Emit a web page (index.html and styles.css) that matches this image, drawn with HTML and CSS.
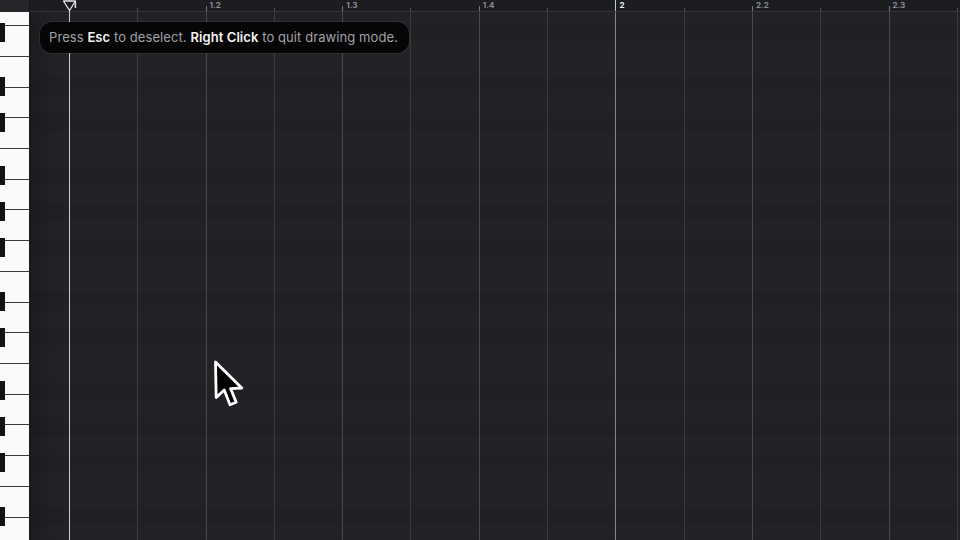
FILE: index.html
```html
<!DOCTYPE html>
<html lang="en">
<head>
    <meta charset="UTF-8">
    <title>Piano Roll</title>
    <link rel="stylesheet" href="styles.css">
</head>

<body>
    <div class="daw">
        <!--건반-->
        <aside class="keys">
            <div class="keys-corner"></div>
            <div class="keys-view">
                <div class="octave">
                    <div class="white"></div><div class="white"></div><div class="white"></div><div class="white"></div>
                    <div class="white"></div><div class="white"></div><div class="white"></div>
                    <span class="black k-as"></span><span class="black k-gs"></span><span class="black k-fs"></span>
                    <span class="black k-ds"></span><span class="black k-cs"></span>
                </div>
                <div class="octave">
                    <div class="white"></div><div class="white"></div><div class="white"></div><div class="white"></div>
                    <div class="white"></div><div class="white"></div><div class="white"></div>
                    <span class="black k-as"></span><span class="black k-gs"></span><span class="black k-fs"></span>
                    <span class="black k-ds"></span><span class="black k-cs"></span>
                </div>
                <div class="octave">
                    <div class="white"></div><div class="white"></div><div class="white"></div><div class="white"></div>
                    <div class="white"></div><div class="white"></div><div class="white"></div>
                    <span class="black k-as"></span><span class="black k-gs"></span><span class="black k-fs"></span>
                    <span class="black k-ds"></span><span class="black k-cs"></span>
                </div>
            </div>
        </aside>

        <!--롤 영역-->
        <main class="roll">
            <div class="ruler">
                <div class="lead"></div>
                <div class="cell bar"><b>1</b></div>
                <div class="cell sub"></div>
                <div class="cell beat"><b>1.2</b></div>
                <div class="cell sub"></div>
                <div class="cell beat"><b>1.3</b></div>
                <div class="cell sub"></div>
                <div class="cell beat"><b>1.4</b></div>
                <div class="cell sub"></div>
                <div class="cell bar"><b>2</b></div>
                <div class="cell sub"></div>
                <div class="cell beat"><b>2.2</b></div>
                <div class="cell sub"></div>
                <div class="cell beat"><b>2.3</b></div>
                <div class="cell sub"></div>
            </div>

            <div class="lanes">
                <div class="lead"></div>
                <div class="cell bar"></div>
                <div class="cell sub"></div>
                <div class="cell beat"></div>
                <div class="cell sub"></div>
                <div class="cell beat"></div>
                <div class="cell sub"></div>
                <div class="cell beat"></div>
                <div class="cell sub"></div>
                <div class="cell bar"></div>
                <div class="cell sub"></div>
                <div class="cell beat"></div>
                <div class="cell sub"></div>
                <div class="cell beat"></div>
                <div class="cell sub"></div>
            </div>

            <!--재생헤드-->
            <div class="playhead">
                <svg class="playhead-cap" width="15" height="12" viewBox="0 0 15 12">
                    <path d="M1.5 1 L13.5 1 L7.5 10.5 Z" fill="#1c1d21" stroke="#e4e4e6" stroke-width="1.3" stroke-linejoin="round"/>
                </svg>
            </div>

            <!--안내문구-->
            <div class="hint">
                Press <b>Esc</b> to deselect. <b>Right Click</b> to quit drawing mode.
            </div>

            <!--마우스커서-->
            <svg class="cursor" width="34" height="52" viewBox="0 0 34 52">
                <path d="M3.5 3 L4.2 38.5 L12.2 31 L18 45.8 L24.2 43.2 L18.6 29.6 L29.8 29 Z"
                      fill="#000" stroke="#fff" stroke-width="2.8" stroke-linejoin="round"/>
            </svg>
        </main>
    </div>
</body>
</html>
```

FILE: styles.css
```css
html,
body {
    margin: 0;
    padding: 0;
}

body {
    background-color: #212226;
    font-family: Inter, "Noto Sans", sans-serif;
    overflow: hidden;
}

.daw {
    display: flex;
    width: 960px;
    height: 540px;
}

/*건반*/
.keys {
    display: flex;
    flex-direction: column;
    flex: 0 0 29px;
    border-right: 1px solid #17181b;
}

.keys-corner {
    flex: 0 0 12px;
    background-color: #26272b;
}

.keys-view {
    flex: 1;
    overflow: hidden;
    background-color: #fafafa;
}

.octave {
    position: relative;
    display: flex;
    flex-direction: column;
    height: 215px;
}

/*첫 옥타브는 화면 위로 올려서 시작*/
.octave:first-child {
    margin-top: -78px;
}

.white {
    flex: 1;
    border-bottom: 1px solid #3a3a3c;
    background-color: #fafafa;
}

.black {
    position: absolute;
    left: 0;
    width: 5px;
    height: 19px;
    background-color: #131313;
}

.k-as { top: 17.4px; }
.k-gs { top: 53.3px; }
.k-fs { top: 89.1px; }
.k-ds { top: 142.8px; }
.k-cs { top: 178.7px; }

/*롤*/
.roll {
    position: relative;
    display: flex;
    flex-direction: column;
    flex: 1;
    overflow: hidden;
}

.ruler,
.lanes {
    display: flex;
}

.lead {
    flex: 0 0 39px;
}

.cell {
    flex: 0 0 68.3px;
    box-sizing: border-box;
}

/*눈금자*/
.ruler {
    flex: 0 0 11px;
    background-color: #1c1d21;
    border-bottom: 1px solid #36373c;
}

.ruler .cell {
    padding: 1px 0 0 4px;
    font-size: 8px;
    line-height: 8px;
    color: #8b8c91;
    background-repeat: no-repeat;
    background-position: left bottom;
}

.ruler b {
    font-weight: 700;
}

.ruler .sub {
    background-image: linear-gradient(#55565b, #55565b);
    background-size: 1px 3px;
}

.ruler .beat {
    background-image: linear-gradient(#75767b, #75767b);
    background-size: 1px 5px;
}

.ruler .bar {
    background-image: linear-gradient(#c9c9cc, #c9c9cc);
    background-size: 1px 11px;
    color: #f1f1f3;
}

/*그리드*/
.lanes {
    flex: 1;
    background-color: #222327;
    /*검은건반 줄은 살짝 어둡게*/
    background-image: linear-gradient(
        #222327 0, #222327 17.92px,
        #202125 17.92px, #202125 35.83px,
        #222327 35.83px, #222327 53.75px,
        #202125 53.75px, #202125 71.67px,
        #222327 71.67px, #222327 89.58px,
        #202125 89.58px, #202125 107.5px,
        #222327 107.5px, #222327 143.33px,
        #202125 143.33px, #202125 161.25px,
        #222327 161.25px, #222327 179.17px,
        #202125 179.17px, #202125 197.08px,
        #222327 197.08px, #222327 215px);
    background-size: 100% 215px;
    background-position: 0 -78px;
    box-shadow: inset 28px 0 24px -18px rgba(0, 0, 0, .22);
}

.lanes .sub {
    border-left: 1px solid #3a3b40;
}

.lanes .beat {
    border-left: 1px solid #47484d;
}

.lanes .bar {
    border-left: 1px solid #85868b;
}

/*재생헤드*/
.playhead {
    position: absolute;
    top: 0;
    bottom: 0;
    left: 39px;
    width: 1px;
    background-color: #cfcfd2;
}

.playhead-cap {
    position: absolute;
    top: 0;
    left: -7px;
}

/*안내문구*/
.hint {
    position: absolute;
    top: 22px;
    left: 10px;
    height: 31px;
    padding: 0 11px 0 9px;
    border-radius: 12px;
    background-color: #060607;
    box-shadow: 0 0 0 1px rgba(255, 255, 255, .06);
    color: #a2a2a7;
    font-size: 13px;
    letter-spacing: .08px;
    line-height: 31px;
    white-space: nowrap;
}

.hint b {
    font-weight: 600;
    color: #f4f4f5;
}

/*커서*/
.cursor {
    position: absolute;
    top: 359px;
    left: 182px;
}
```
